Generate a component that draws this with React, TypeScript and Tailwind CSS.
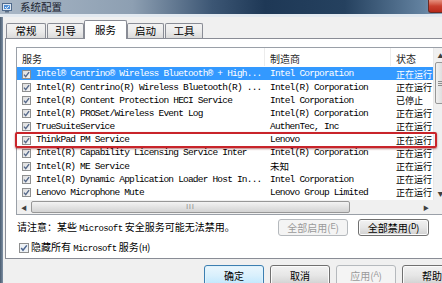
import React from "react";

const CJK = "font-['Noto_Sans_CJK_SC','Liberation_Sans',sans-serif]";
const MONO = "font-['Liberation_Mono','Noto_Sans_CJK_SC',monospace] text-[9.5px] tracking-[-0.8px]";

function A({ children }: { children: React.ReactNode }) {
  return <span className="font-['Liberation_Mono',monospace] text-[9px] tracking-[-0.6px]">{children}</span>;
}

function Check() {
  return (
    <svg width="9" height="9" viewBox="0 0 9 9" className="shrink-0">
      <defs>
        <linearGradient id="cb" x1="0" y1="0" x2="1" y2="1">
          <stop offset="0" stopColor="#dcdcdc" />
          <stop offset="1" stopColor="#f6f6f6" />
        </linearGradient>
      </defs>
      <rect x="0.5" y="0.5" width="8" height="8" fill="url(#cb)" stroke="#8e8f8f" />
      <path d="M2 4.6 L3.7 6.6 L7.1 2.1" stroke="#56698a" strokeWidth="1.4" fill="none" />
    </svg>
  );
}

const rows: [string, string, string][] = [
  ["Intel® Centrino® Wireless Bluetooth® + High...", "Intel Corporation", "正在运行"],
  ["Intel(R) Centrino(R) Wireless Bluetooth(R) ...", "Intel(R) Corporation", "正在运行"],
  ["Intel(R) Content Protection HECI Service", "Intel Corporation", "已停止"],
  ["Intel(R) PROSet/Wireless Event Log", "Intel(R) Corporation", "正在运行"],
  ["TrueSuiteService", "AuthenTec, Inc", "正在运行"],
  ["ThinkPad PM Service", "Lenovo", "正在运行"],
  ["Intel(R) Capability Licensing Service Inter", "Intel(R) Corporation", "正在运行"],
  ["Intel(R) ME Service", "未知", "正在运行"],
  ["Intel(R) Dynamic Application Loader Host In...", "Intel Corporation", "正在运行"],
  ["Lenovo Microphone Mute", "Lenovo Group Limited", "正在运行"],
];

function Tab({ label, w, active }: { label: string; w: string; active?: boolean }) {
  if (active) {
    return (
      <div
        className={`relative z-10 ${w} h-[19px] bg-white border border-b-0 border-[#898c95] rounded-t-[2px] flex items-start justify-center pt-[1px] text-[10.5px] text-black`}
      >
        {label}
      </div>
    );
  }
  return (
    <div
      className={`${w} h-[16px] bg-gradient-to-b from-[#f3f3f3] via-[#ebebeb] to-[#d8d8d8] border border-b-0 border-[#898c95] rounded-t-[2px] flex items-center justify-center text-[10.5px] text-black leading-none`}
    >
      {label}
    </div>
  );
}

function Btn({
  children,
  w,
  variant,
}: {
  children: React.ReactNode;
  w: string;
  variant?: "default" | "disabled";
}) {
  const base = `${w} rounded-[3px] border flex items-center justify-center text-[10px] leading-none shrink-0`;
  if (variant === "disabled")
    return <div className={`${base} border-[#b5b9bd] bg-[#f4f4f4] text-[#9a9a9a]`}>{children}</div>;
  if (variant === "default")
    return (
      <div
        className={`${base} border-[#3c7fb1] bg-gradient-to-b from-[#eaf6fd] via-[#d9f0fc] to-[#bee6fd] text-black shadow-[inset_0_0_0_1px_#dff2fc]`}
      >
        {children}
      </div>
    );
  return (
    <div
      className={`${base} border-[#707070] bg-gradient-to-b from-[#f2f2f2] via-[#e6e6e6] to-[#d0d0d0] text-black shadow-[inset_0_0_0_1px_#fbfbfb]`}
    >
      {children}
    </div>
  );
}

export default function App() {
  return (
    <div className={`w-[442px] h-[283px] overflow-hidden bg-[#f0f0f0] flex flex-col ${CJK}`}>
      {/* Title bar */}
      <div className="h-[14px] shrink-0 flex items-center bg-[linear-gradient(to_right,#a9b7c6_0%,#8d9fb2_30%,#3c5674_48%,#1e3856_60%,#25415f_78%,#6483a1_96%,#8ea4ba_100%)]">
        <svg width="11" height="11" viewBox="0 0 11 11" className="ml-[2px] shrink-0">
          <rect x="0.5" y="1.5" width="9" height="7" fill="#dfe9f4" stroke="#4f6a8c" />
          <rect x="2" y="3" width="6" height="4" fill="#4d8ed6" />
          <rect x="3" y="9" width="4" height="1.5" fill="#5c6f86" />
          <path d="M3 5 L4.5 6.3 L7.3 3.6" stroke="#fff" strokeWidth="1" fill="none" />
        </svg>
        <span className="ml-[7px] text-[10.5px] leading-none text-[#1b2430]">系统配置</span>
        <div className="flex-1" />
        <div className="w-[14px] h-[13px] self-start rounded-bl-[3px] bg-gradient-to-b from-[#e5907f] via-[#c9402f] to-[#b8281a] border-l border-b border-[#6b2a24]" />
      </div>
      <div className="h-[3px] shrink-0 bg-[#e2e9f0]" />

      <div className="flex-1 flex">
        <div className="w-[3px] shrink-0 bg-gradient-to-r from-[#4a5c70] to-[#7f91a5]" />
        <div className="flex-1 flex flex-col pl-[2px]">
          {/* Tabs */}
          <div className="mt-[3px] h-[19px] flex items-end pl-[1px] shrink-0">
            <Tab label="常规" w="w-[40px]" />
            <div className="w-[1px]" />
            <Tab label="引导" w="w-[37px]" />
            <Tab label="服务" w="w-[43px]" active />
            <Tab label="启动" w="w-[37px]" />
            <div className="w-[1px]" />
            <Tab label="工具" w="w-[38px]" />
          </div>

          {/* Tab page */}
          <div className="-mt-px w-[445px] h-[221px] shrink-0 bg-white border border-[#898c95] pt-[8px] pl-[10px] flex flex-col">
            {/* List view */}
            <div className="w-[432px] h-[168px] border border-[#9aa0a8] flex flex-col shrink-0">
              <div className="flex flex-1 min-h-0">
                <div className="flex-1 flex flex-col min-w-0">
                  {/* Header */}
                  <div className="h-[18px] flex items-center text-[10px] text-[#1e1e1e] leading-none shrink-0">
                    <div className="w-[248px] pl-[5px] pt-[3px] border-r border-[#ececec] h-full flex items-center">服务</div>
                    <div className="w-[126px] pl-[5px] pt-[3px] border-r border-[#ececec] h-full flex items-center">制造商</div>
                    <div className="flex-1 pl-[5px] pt-[3px] h-full flex items-center">状态</div>
                  </div>
                  {/* Rows */}
                  <div className="flex flex-col pt-[1px]">
                    {rows.map((r, i) => {
                      const sel = i === 0;
                      return (
                        <div
                          key={i}
                          className={`relative h-[13.2px] flex items-center pt-[1px] ${sel ? "bg-[#3399ff] text-white" : "text-black"}`}
                        >
                          <div className="w-[248px] h-full flex items-center pl-[5px] overflow-hidden shrink-0">
                            <Check />
                            <span className={`ml-[5px] whitespace-nowrap ${MONO} leading-none`}>{r[0]}</span>
                          </div>
                          <div className={`w-[126px] h-full flex items-center pl-[5px] whitespace-nowrap shrink-0 leading-none ${/[\u4e00-\u9fff]/.test(r[1]) ? "text-[9.5px]" : MONO}`}>
                            {r[1]}
                          </div>
                          <div className="flex-1 h-full flex items-center pl-[5px] text-[9px] leading-none whitespace-nowrap">{r[2]}</div>
                          {i === 5 && (
                            <div className="absolute -left-[2px] -right-[4px] -top-[1px] -bottom-[2px] border-2 border-[#c9242a] rounded-[2px] shadow-[0_1px_2px_rgba(120,0,0,0.5)] z-10" />
                          )}
                        </div>
                      );
                    })}
                  </div>
                </div>
                {/* Vertical scrollbar */}
                <div className="w-[14px] shrink-0 bg-[#f0f0f0] flex flex-col border-l border-[#e8e8e8]">
                  <div className="h-[14px] flex items-center justify-center text-[6px] text-[#404040]">▲</div>
                  <div className="mx-[1px] h-[42px] rounded-[2px] border border-[#979797] bg-gradient-to-r from-[#f1f1f1] to-[#d6d6d6] flex items-center justify-center">
                    <div className="w-[6px] h-[5px] border-y border-[#8c8c8c] flex items-center"><div className="w-full h-px bg-[#8c8c8c]" /></div>
                  </div>
                  <div className="flex-1" />
                  <div className="h-[14px] flex items-center justify-center text-[6px] text-[#404040]">▼</div>
                </div>
              </div>
              {/* Horizontal scrollbar */}
              <div className="h-[14px] flex shrink-0">
                <div className="flex-1 bg-[#f0f0f0] flex items-center">
                  <div className="w-[14px] h-full flex items-center justify-center text-[6px] text-[#404040]">◀</div>
                  <div className="w-[319px] h-[12px] rounded-[2px] border border-[#979797] bg-gradient-to-b from-[#f3f3f3] to-[#d3d3d3] flex items-center justify-center">
                    <span className="text-[6px] text-[#777] leading-none tracking-[1px]">III</span>
                  </div>
                  <div className="flex-1" />
                  <div className="w-[14px] h-full flex items-center justify-center text-[6px] text-[#404040]">▶</div>
                </div>
                <div className="w-[14px] bg-[#f0f0f0]" />
              </div>
            </div>

            {/* Note + buttons */}
            <div className="mt-[4px] h-[17px] flex items-center shrink-0">
              <div className="pl-[1px] w-[262px] text-[10px] text-black leading-none whitespace-nowrap">
                请注意：某些 <A>Microsoft</A> 安全服务可能无法禁用。
              </div>
              <Btn w="w-[70px] h-[17px]" variant="disabled">
                全部启用(<A>E</A>)
              </Btn>
              <div className="w-[10px]" />
              <Btn w="w-[71px] h-[17px]">
                全部禁用(<A>D</A>)
              </Btn>
            </div>

            {/* Hide MS services */}
            <div className="mt-[7px] h-[10px] flex items-center pl-[3px] shrink-0">
              <svg width="10" height="10" viewBox="0 0 10 10" className="shrink-0">
                <rect x="0.5" y="0.5" width="9" height="9" fill="#eef2f6" stroke="#8e8f8f" />
                <path d="M2.2 5 L4 7.2 L7.8 2.4" stroke="#4c6590" strokeWidth="1.5" fill="none" />
              </svg>
              <span className="ml-[2px] text-[10px] text-black leading-none whitespace-nowrap">
                隐藏所有 <A>Microsoft</A> 服务(<A>H</A>)
              </span>
            </div>
          </div>

          {/* Dialog buttons */}
          <div className="mt-[6px] flex pl-[199px] gap-[6px]">
            <Btn w="w-[60px] h-[21px]" variant="default">确定</Btn>
            <Btn w="w-[60px] h-[21px]">取消</Btn>
            <Btn w="w-[60px] h-[21px]" variant="disabled">
              应用(<A>A</A>)
            </Btn>
            <Btn w="w-[60px] h-[21px]">帮助</Btn>
          </div>
        </div>
      </div>
    </div>
  );
}
